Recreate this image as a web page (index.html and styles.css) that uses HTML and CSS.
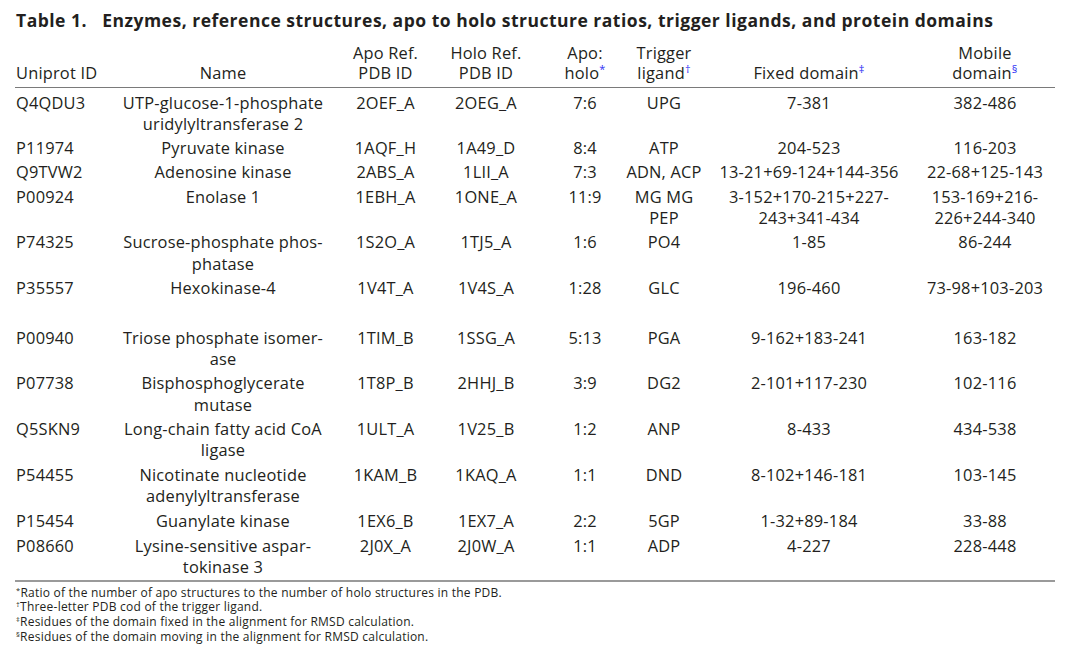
FILE: index.html
```html
<!DOCTYPE html>
<html>
<head>
<meta charset="utf-8">
<link rel="stylesheet" href="styles.css">
</head>
<body>
<div class="page">
  <h1 class="title">Table 1.&nbsp;&nbsp; Enzymes, reference structures, apo to holo structure ratios, trigger ligands, and protein domains</h1>
  <table class="tbl">
    <colgroup>
      <col class="c1"><col class="c2"><col class="c3"><col class="c4"><col class="c5"><col class="c6"><col class="c7"><col class="c8">
    </colgroup>
    <thead>
      <tr>
        <th class="left">Uniprot ID</th>
        <th>Name</th>
        <th>Apo Ref.<br>PDB ID</th>
        <th>Holo Ref.<br>PDB ID</th>
        <th>Apo:<br>holo<sup class="fn">*</sup></th>
        <th>Trigger<br>ligand<sup class="fn">†</sup></th>
        <th>Fixed domain<sup class="fn">‡</sup></th>
        <th>Mobile<br>domain<sup class="fn">§</sup></th>
      </tr>
    </thead>
    <tbody>
      <tr class="first">
        <td class="left">Q4QDU3</td><td>UTP-glucose-1-phosphate<br>uridylyltransferase 2</td><td>2OEF_A</td><td>2OEG_A</td><td>7:6</td><td>UPG</td><td>7-381</td><td>382-486</td>
      </tr>
      <tr>
        <td class="left">P11974</td><td>Pyruvate kinase</td><td>1AQF_H</td><td>1A49_D</td><td>8:4</td><td>ATP</td><td>204-523</td><td>116-203</td>
      </tr>
      <tr>
        <td class="left">Q9TVW2</td><td>Adenosine kinase</td><td>2ABS_A</td><td>1LII_A</td><td>7:3</td><td>ADN, ACP</td><td>13-21+69-124+144-356</td><td>22-68+125-143</td>
      </tr>
      <tr>
        <td class="left">P00924</td><td>Enolase 1</td><td>1EBH_A</td><td>1ONE_A</td><td>11:9</td><td>MG MG<br>PEP</td><td>3-152+170-215+227-<br>243+341-434</td><td>153-169+216-<br>226+244-340</td>
      </tr>
      <tr>
        <td class="left">P74325</td><td>Sucrose-phosphate phos-<br>phatase</td><td>1S2O_A</td><td>1TJ5_A</td><td>1:6</td><td>PO4</td><td>1-85</td><td>86-244</td>
      </tr>
      <tr class="tall">
        <td class="left">P35557</td><td>Hexokinase-4</td><td>1V4T_A</td><td>1V4S_A</td><td>1:28</td><td>GLC</td><td>196-460</td><td>73-98+103-203</td>
      </tr>
      <tr>
        <td class="left">P00940</td><td>Triose phosphate isomer-<br>ase</td><td>1TIM_B</td><td>1SSG_A</td><td>5:13</td><td>PGA</td><td>9-162+183-241</td><td>163-182</td>
      </tr>
      <tr>
        <td class="left">P07738</td><td>Bisphosphoglycerate<br>mutase</td><td>1T8P_B</td><td>2HHJ_B</td><td>3:9</td><td>DG2</td><td>2-101+117-230</td><td>102-116</td>
      </tr>
      <tr>
        <td class="left">Q5SKN9</td><td>Long-chain fatty acid CoA<br>ligase</td><td>1ULT_A</td><td>1V25_B</td><td>1:2</td><td>ANP</td><td>8-433</td><td>434-538</td>
      </tr>
      <tr>
        <td class="left">P54455</td><td>Nicotinate nucleotide<br>adenylyltransferase</td><td>1KAM_B</td><td>1KAQ_A</td><td>1:1</td><td>DND</td><td>8-102+146-181</td><td>103-145</td>
      </tr>
      <tr class="mid">
        <td class="left">P15454</td><td>Guanylate kinase</td><td>1EX6_B</td><td>1EX7_A</td><td>2:2</td><td>5GP</td><td>1-32+89-184</td><td>33-88</td>
      </tr>
      <tr class="last">
        <td class="left">P08660</td><td>Lysine-sensitive aspar-<br>tokinase 3</td><td>2J0X_A</td><td>2J0W_A</td><td>1:1</td><td>ADP</td><td>4-227</td><td>228-448</td>
      </tr>
    </tbody>
  </table>
  <div class="notes">
    <p><sup>*</sup>Ratio of the number of apo structures to the number of holo structures in the PDB.</p>
    <p><sup>†</sup>Three-letter PDB cod of the trigger ligand.</p>
    <p><sup>‡</sup>Residues of the domain fixed in the alignment for RMSD calculation.</p>
    <p><sup>§</sup>Residues of the domain moving in the alignment for RMSD calculation.</p>
  </div>
</div>
</body>
</html>
```
FILE: styles.css
```css
html, body {
  margin: 0;
  padding: 0;
  background: #ffffff;
}
body {
  font-family: "Open Sans", "Noto Sans", sans-serif;
  color: #231f20;
}
.page {
  padding: 9px 0 0 15px;
  width: 1040px;
}
.title {
  margin: 0 0 0 1px;
  font-size: 17.5px;
  font-weight: 700;
  letter-spacing: 0.5px;
  line-height: 22px;
  white-space: nowrap;
}
.tbl {
  margin-top: 11.5px;
  border-collapse: collapse;
  table-layout: fixed;
  width: 1040px;
  font-size: 16.4px;
  letter-spacing: 0.2px;
}
.c1 { width: 87px; }
.c2 { width: 242px; }
.c3 { width: 83px; }
.c4 { width: 118px; }
.c5 { width: 80px; }
.c6 { width: 78px; }
.c7 { width: 212px; }
.c8 { width: 140px; }
.tbl th {
  font-weight: 400;
  line-height: 20px;
  text-align: center;
  vertical-align: bottom;
  padding: 0 0 4px 0;
  white-space: nowrap;
  border-bottom: 1px solid #7a7a7a;
}
.tbl td {
  line-height: 21.3px;
  text-align: center;
  vertical-align: top;
  padding: 1.5px 0;
  white-space: nowrap;
}
.tbl .left {
  text-align: left;
  padding-left: 1px;
}
.tbl tr.first td { padding-top: 4px; }
.tbl tr.tall td { height: 47px; }
.tbl tr.mid td { padding-top: 2.5px; padding-bottom: 2px; }
.tbl tr.last td {
  padding-bottom: 2px;
  border-bottom: 2px solid #9a9a9a;
}
.fn {
  color: #2f2ff5;
  font-size: 11px;
  line-height: 0;
  vertical-align: 6px;
}
.notes {
  margin-top: 4px;
  padding-left: 1px;
  font-size: 12px;
  letter-spacing: 0.23px;
  line-height: 14.7px;
}
.notes p { margin: 0; }
.notes sup {
  font-size: 7.5px;
  line-height: 0;
  vertical-align: 4px;
}
```
